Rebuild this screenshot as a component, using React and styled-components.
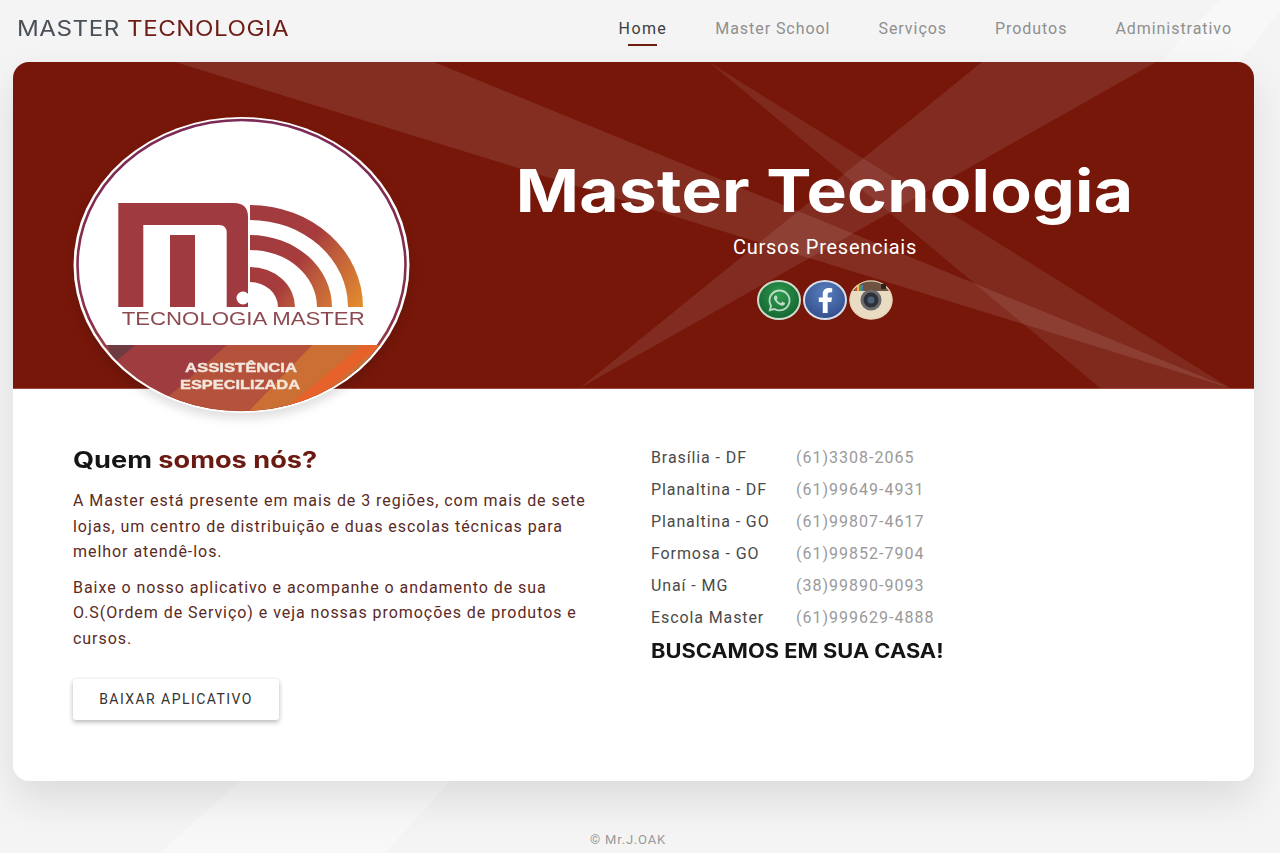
import React from "react";
import styled, { createGlobalStyle } from "styled-components";
import { FaWhatsapp, FaFacebookF } from "react-icons/fa";

const Global = createGlobalStyle`
  html, body { margin: 0; padding: 0; background: #f4f4f4; }
  body { font-family: Roboto, "Liberation Sans", sans-serif; overflow: hidden; }
  * { box-sizing: border-box; }
`;

const Page = styled.div`
  position: relative;
  width: 1280px;
  height: 853px;
  overflow: hidden;
  background: #f4f4f4;
`;
const PageBeams = styled.svg`
  position: absolute;
  inset: 0;
  width: 1280px;
  height: 853px;
`;
const Header = styled.header`
  position: relative;
  height: 62px;
  display: flex;
  align-items: center;
  justify-content: space-between;
  padding: 0 48px 6px 17px;
`;
const Brand = styled.div`
  font-family: Inter, "Noto Sans", sans-serif;
  font-weight: 400;
  font-size: 21px;
  letter-spacing: 0.45px;
  color: #4a5058;
  white-space: nowrap;
  transform: scaleX(1.15);
  transform-origin: left center;
`;
const BrandAccent = styled.span`
  color: #6e1c16;
`;
const Nav = styled.nav`
  display: flex;
  gap: 48px;
`;
const NavLink = styled.a`
  position: relative;
  font-size: 16px;
  letter-spacing: ${(p) => (p.$active ? "1.4px" : "0.95px")};
  color: ${(p) => (p.$active ? "#3d3d3d" : "#8f8f8f")};
  &::after {
    content: "";
    display: ${(p) => (p.$active ? "block" : "none")};
    position: absolute;
    left: 9px;
    right: 10px;
    bottom: -8px;
    height: 2px;
    background: #6e1c12;
  }
`;
const Card = styled.main`
  position: relative;
  width: 1241px;
  height: 719px;
  margin-left: 13px;
  background: #fff;
  border-radius: 16px;
  box-shadow: 0 18px 40px rgba(0, 0, 0, 0.1);
`;
const Hero = styled.section`
  position: relative;
  height: 327px;
  padding: 94px 0 0 383px;
  background: #76170a;
  border-bottom: 1px solid #a04a40;
  border-radius: 16px 16px 0 0;
  overflow: hidden;
  display: flex;
  flex-direction: column;
  align-items: center;
`;
const HeroBeams = styled.svg`
  position: absolute;
  left: 0;
  top: 0;
  width: 1241px;
  height: 326px;
`;
const Title = styled.h1`
  position: relative;
  margin: 0;
  font-family: Inter, "Noto Sans", sans-serif;
  font-weight: 700;
  font-size: 59px;
  line-height: 70px;
  letter-spacing: 0.2px;
  color: #fff;
  white-space: nowrap;
  transform: scaleX(1.15);
`;
const Subtitle = styled.p`
  position: relative;
  margin: 7px 0 0;
  font-size: 20px;
  line-height: 28px;
  letter-spacing: 0.72px;
  color: #fff;
`;
const Socials = styled.div`
  position: relative;
  display: flex;
  gap: 2px;
  margin-top: 19px;
`;
const Social = styled.span`
  width: 44px;
  height: 40px;
  border-radius: 50%;
  display: flex;
  align-items: center;
  justify-content: center;
  color: ${(p) => p.$glyph};
  font-size: 25px;
  border: 2px solid ${(p) => p.$ring};
  background: ${(p) => p.$bg};
`;
const InstaIcon = styled.svg`
  width: 44px;
  height: 40px;
  display: block;
`;
const Logo = styled.svg`
  position: absolute;
  left: 59px;
  top: 53px;
  width: 340px;
  height: 300px;
  filter: drop-shadow(0 6px 5px rgba(0, 0, 0, 0.12));
`;
const Content = styled.section`
  display: grid;
  grid-template-columns: 518px 1fr;
  column-gap: 60px;
  padding: 53px 60px 0;
`;
const Heading = styled.h2`
  margin: 3px 0 13px;
  font-family: Inter, "Noto Sans", sans-serif;
  font-weight: 700;
  font-size: 23px;
  line-height: 30px;
  color: #151515;
  transform: scaleX(1.18);
  transform-origin: left center;
`;
const HeadingAccent = styled.span`
  color: #6a1a12;
`;
const Para = styled.p`
  margin: 0 0 10px;
  font-size: 16px;
  line-height: 25.6px;
  letter-spacing: 0.95px;
  color: #5a2a25;
`;
const DownloadButton = styled.button`
  display: block;
  width: 206px;
  height: 41px;
  margin-top: 27px;
  border: 0;
  border-radius: 3px;
  background: #fff;
  font-family: Roboto, sans-serif;
  font-size: 14px;
  letter-spacing: 1.45px;
  color: #333;
  box-shadow: 0 2px 5px rgba(0, 0, 0, 0.3);
`;
const PhoneList = styled.div`
  display: flex;
  flex-direction: column;
  margin-top: -1px;
`;
const PhoneRow = styled.div`
  display: grid;
  grid-template-columns: 145px 1fr;
  height: 32px;
  align-items: center;
  font-size: 16px;
`;
const City = styled.span`
  letter-spacing: 0.9px;
  color: #4a4a4a;
`;
const Phone = styled.span`
  letter-spacing: 1px;
  color: #9a9a9a;
`;
const Callout = styled.div`
  margin-top: 3px;
  font-family: Inter, "Noto Sans", sans-serif;
  font-weight: 700;
  font-size: 19.5px;
  line-height: 30px;
  color: #151515;
  white-space: nowrap;
  transform: scaleX(1.12);
  transform-origin: left center;
`;
const Footer = styled.footer`
  position: relative;
  margin-top: 51px;
  padding-right: 24px;
  text-align: center;
  font-size: 13px;
  letter-spacing: 0.8px;
  color: #999;
`;

const links = ["Home", "Master School", "Serviços", "Produtos", "Administrativo"];
const phones = [
  ["Brasília - DF", "(61)3308-2065"],
  ["Planaltina - DF", "(61)99649-4931"],
  ["Planaltina - GO", "(61)99807-4617"],
  ["Formosa - GO", "(61)99852-7904"],
  ["Unaí - MG", "(38)99890-9093"],
  ["Escola Master", "(61)999629-4888"],
];

function arc(rxO, ryO, rxI, ryI) {
  const cx = 250;
  const cy = 307;
  return `M${cx} ${cy - ryO}A${rxO} ${ryO} 0 0 1 ${cx + rxO} ${cy}H${cx + rxI}A${rxI} ${ryI} 0 0 0 ${cx} ${cy - ryI}Z`;
}

function LogoMark() {
  return (
    <Logo viewBox="72 115 340 300" aria-label="Logo">
      <defs>
        <linearGradient id="wave" x1="250" y1="220" x2="365" y2="300" gradientUnits="userSpaceOnUse">
          <stop offset="0" stopColor="#a03b3f" />
          <stop offset="0.45" stopColor="#a73c3d" />
          <stop offset="0.62" stopColor="#bd5a3c" />
          <stop offset="1" stopColor="#e38c2e" />
        </linearGradient>
        <linearGradient id="ring" x1="0" y1="117" x2="0" y2="413" gradientUnits="userSpaceOnUse">
          <stop offset="0" stopColor="#7a2a55" />
          <stop offset="0.7" stopColor="#8a3048" />
          <stop offset="1" stopColor="#c0703a" />
        </linearGradient>
        <clipPath id="inner">
          <ellipse cx="241.5" cy="265" rx="165" ry="146" />
        </clipPath>
      </defs>
      <ellipse cx="241.5" cy="265" rx="168" ry="148" fill="#fff" />
      <ellipse cx="241.5" cy="265" rx="164" ry="145" fill="#fff" stroke="url(#ring)" strokeWidth="2.6" />
      <path
        fill="#9f3b40"
        fillRule="evenodd"
        d="M118.3 203H234Q248 203 248 217V307H226.7V233Q226.7 225 219 225H143.3V307H118.3ZM170 235H195V307H170Z"
      />
      <path fill="url(#wave)" d={arc(113, 102, 98, 87)} />
      <path fill="url(#wave)" d={arc(82, 72, 67, 57)} />
      <path fill="url(#wave)" d={arc(45, 40, 28, 25)} />
      <circle cx="243" cy="298" r="6.5" fill="#fff" />
      <text x="121.7" y="325" fontFamily="Liberation Sans, sans-serif" fontSize="18" fill="#8c4a50" textLength="243" lengthAdjust="spacingAndGlyphs">
        TECNOLOGIA MASTER
      </text>
      <g clipPath="url(#inner)">
        <rect x="70" y="345" width="340" height="70" fill="#9f3c40" />
        <polygon points="227,345 312,345 247,413 150,413" fill="#b5523c" />
        <polygon points="312,345 390,345 310,413 247,413" fill="#cc6f35" />
        <polygon points="362,345 380,345 300,413 280,413" fill="#e6622a" />
        <path d="M108 345H135L112 365Z" fill="#6e3c40" />
      </g>
      <text x="185" y="372" fontFamily="Liberation Sans, sans-serif" fontWeight="700" fontSize="13.5" fill="#f3e6dc" stroke="#f3e6dc" strokeWidth="0.4" textLength="112" lengthAdjust="spacingAndGlyphs">
        ASSISTÊNCIA
      </text>
      <text x="180" y="389" fontFamily="Liberation Sans, sans-serif" fontWeight="700" fontSize="13.5" fill="#f3e6dc" stroke="#f3e6dc" strokeWidth="0.4" textLength="120" lengthAdjust="spacingAndGlyphs">
        ESPECILIZADA
      </text>
    </Logo>
  );
}

function Instagram() {
  return (
    <InstaIcon viewBox="0 0 44 40" aria-label="Instagram">
      <defs>
        <clipPath id="ig">
          <ellipse cx="22" cy="20" rx="21.5" ry="19.5" />
        </clipPath>
      </defs>
      <g clipPath="url(#ig)">
        <rect width="44" height="40" fill="#e9dcc2" />
        <rect width="44" height="11" fill="#6f5240" />
        <rect x="6" y="5" width="2" height="6" fill="#d24b3a" />
        <rect x="8" y="5" width="2" height="6" fill="#e6c24b" />
        <rect x="10" y="5" width="2" height="6" fill="#4f9c58" />
        <rect x="12" y="5" width="2" height="6" fill="#4a78b8" />
      </g>
      <ellipse cx="22" cy="20" rx="21" ry="19" fill="none" stroke="#e6d4b8" strokeWidth="1.2" />
      <circle cx="22" cy="20" r="10.5" fill="#6a6a6c" />
      <circle cx="22" cy="20" r="7.5" fill="#2e3238" />
      <circle cx="22" cy="20" r="3.5" fill="#4c6078" />
      <rect x="32" y="4" width="5" height="5" rx="1" fill="#2a2320" />
    </InstaIcon>
  );
}

export default function App() {
  return (
    <Page>
      <Global />
      <PageBeams viewBox="0 0 1280 853">
        <polygon points="240,781 450,781 385,853 160,853" fill="#f8f8f8" />
        <polygon points="1160,62 1220,0 1280,0 1280,10 1240,62" fill="#f8f8f8" />
      </PageBeams>
      <Header>
        <Brand>
          MASTER <BrandAccent>TECNOLOGIA</BrandAccent>
        </Brand>
        <Nav>
          {links.map((l, i) => (
            <NavLink key={l} $active={i === 0}>
              {l}
            </NavLink>
          ))}
        </Nav>
      </Header>
      <Card>
        <Hero>
          <HeroBeams viewBox="13 62 1241 326">
            <polygon points="175,62 434,62 1230,388" fill="#fff" fillOpacity="0.1" />
            <polygon points="982,62 1156,62 580,388" fill="#fff" fillOpacity="0.09" />
            <polygon points="709,62 1100,388 1230,388" fill="#fff" fillOpacity="0.08" />
          </HeroBeams>
          <Title>Master Tecnologia</Title>
          <Subtitle>Cursos Presenciais</Subtitle>
          <Socials>
            <Social $bg="radial-gradient(circle at 50% 35%, #2f9a4e, #0d5a2a)" $ring="#cfdccf" $glyph="rgba(255,255,255,.7)">
              <FaWhatsapp />
            </Social>
            <Social $bg="radial-gradient(circle at 50% 30%, #5a80c0, #2b4480)" $ring="#d8deea" $glyph="#fff">
              <FaFacebookF />
            </Social>
            <Instagram />
          </Socials>
        </Hero>
        <LogoMark />
        <Content>
          <div>
            <Heading>
              Quem <HeadingAccent>somos nós?</HeadingAccent>
            </Heading>
            <Para>
              A Master está presente em mais de 3 regiões, com mais de sete lojas, um centro de distribuição e duas
              escolas técnicas para melhor atendê-los.
            </Para>
            <Para>
              Baixe o nosso aplicativo e acompanhe o andamento de sua O.S(Ordem de Serviço) e veja nossas promoções de
              produtos e cursos.
            </Para>
            <DownloadButton>BAIXAR APLICATIVO</DownloadButton>
          </div>
          <PhoneList>
            {phones.map(([c, p]) => (
              <PhoneRow key={c}>
                <City>{c}</City>
                <Phone>{p}</Phone>
              </PhoneRow>
            ))}
            <Callout>BUSCAMOS EM SUA CASA!</Callout>
          </PhoneList>
        </Content>
      </Card>
      <Footer>© Mr.J.OAK</Footer>
    </Page>
  );
}
